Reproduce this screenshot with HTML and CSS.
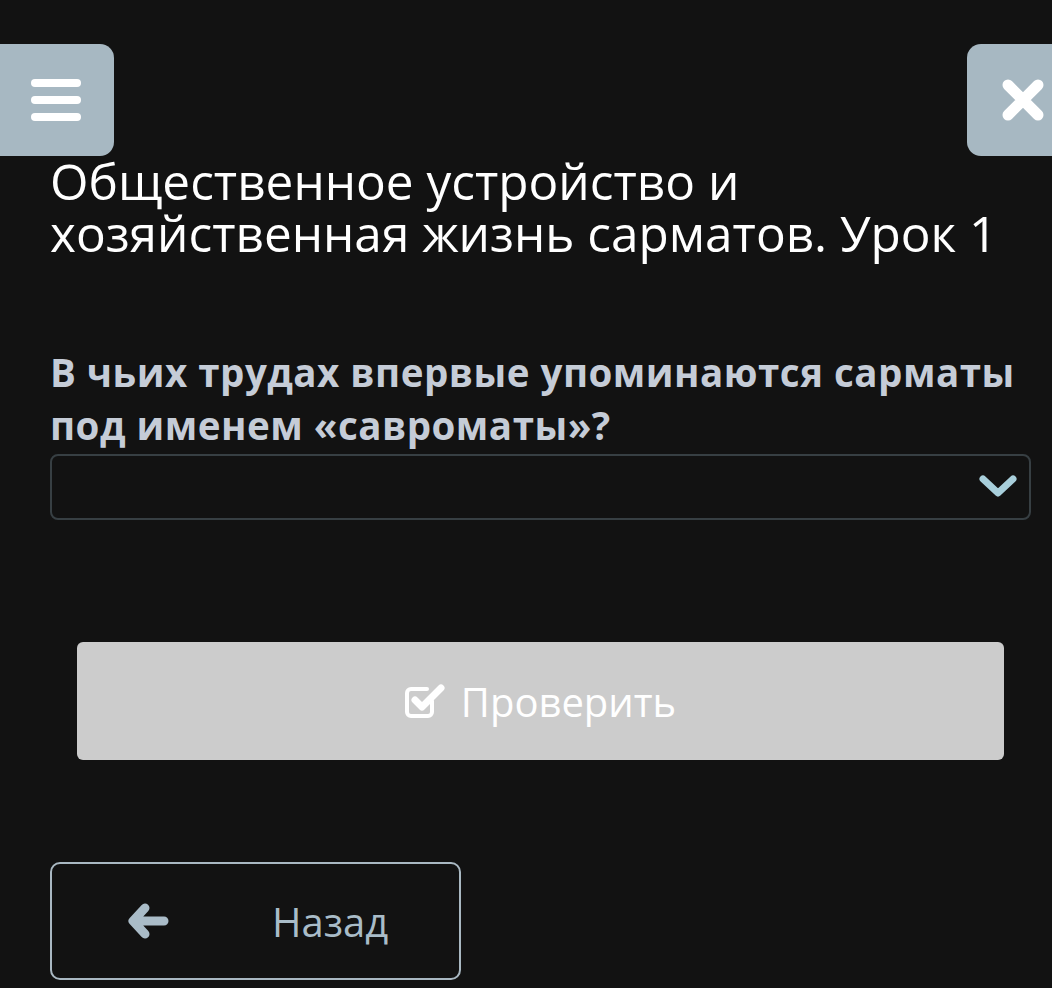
FILE: index.html
```html
<!DOCTYPE html>
<html lang="ru">
<head>
<meta charset="utf-8">
<title>Урок</title>
<link rel="stylesheet" href="styles.css">
</head>
<body>
<header class="topbar">
  <button class="menu-btn" aria-label="Меню">
    <svg width="52" height="44" viewBox="0 0 52 44">
      <rect x="1" y="1" width="50" height="8" rx="4" fill="#fff"/>
      <rect x="1" y="18" width="50" height="8" rx="4" fill="#fff"/>
      <rect x="1" y="35" width="50" height="8" rx="4" fill="#fff"/>
    </svg>
  </button>
  <button class="close-btn" aria-label="Закрыть">
    <svg width="44" height="44" viewBox="0 0 44 44">
      <path d="M7 7 L37 37 M37 7 L7 37" stroke="#fff" stroke-width="11" stroke-linecap="round"/>
    </svg>
  </button>
</header>
<main class="content">
  <h1 class="title">Общественное устройство и хозяйственная жизнь сарматов. Урок 1</h1>
  <h2 class="question">В чьих трудах впервые упоминаются сарматы под именем «савроматы»?</h2>
  <div class="select">
    <svg class="chevron" width="38" height="26" viewBox="0 0 38 26">
      <path d="M4 5 L19 19 L34 5" fill="none" stroke="#a8cfdb" stroke-width="7" stroke-linecap="round" stroke-linejoin="round"/>
    </svg>
  </div>
  <div class="check-row">
    <button class="check-btn">
      <svg width="42" height="36" viewBox="0 0 42 36">
        <path d="M27 18 V29 A4 4 0 0 1 23 33 H6 A4 4 0 0 1 2 29 V10 A4 4 0 0 1 6 6 H22" fill="none" stroke="#fff" stroke-width="4" stroke-linecap="round"/>
        <path d="M10 17 L17 24 L36 5" fill="none" stroke="#fff" stroke-width="7" stroke-linecap="round" stroke-linejoin="round"/>
      </svg>
      <span>Проверить</span>
    </button>
  </div>
  <button class="back-btn">
    <svg width="42" height="36" viewBox="0 0 42 36">
      <path d="M17 5 L5 18 L17 31 M6 18 L36 18" fill="none" stroke="#aabcc8" stroke-width="9" stroke-linecap="round" stroke-linejoin="round"/>
    </svg>
    <span>Назад</span>
  </button>
</main>
</body>
</html>
```

FILE: styles.css
```css
html, body {
  margin: 0;
  padding: 0;
  background: #121212;
}
body {
  font-family: "Open Sans", "Noto Sans", sans-serif;
  width: 1052px;
  height: 988px;
  overflow: hidden;
}
button {
  font-family: inherit;
  border: none;
  cursor: pointer;
  padding: 0;
}
.topbar {
  display: flex;
  justify-content: space-between;
  align-items: flex-start;
  padding-top: 44px;
}
.menu-btn {
  width: 114px;
  height: 112px;
  background: #a7b8c2;
  border-radius: 0 14px 14px 0;
  display: flex;
  align-items: center;
  justify-content: center;
  padding-right: 2px;
}
.close-btn {
  width: 85px;
  height: 112px;
  background: #a7b8c2;
  border-radius: 14px 0 0 14px;
  display: flex;
  align-items: center;
  justify-content: flex-end;
  padding-right: 7px;
}
.content {
  padding: 0 21px 0 50px;
}
.title {
  margin: -1px 0 0;
  font-weight: 400;
  font-size: 49.5px;
  line-height: 52px;
  color: #ffffff;
}
.question {
  margin: 87px 0 0;
  font-weight: 700;
  font-size: 38.5px;
  letter-spacing: 0.5px;
  line-height: 53px;
  color: #c5ccd7;
}
.select {
  margin-top: 2px;
  height: 62px;
  border: 2px solid #373f43;
  border-radius: 8px;
  display: flex;
  align-items: center;
  justify-content: flex-end;
  padding-right: 12px;
}
.check-row {
  padding: 122px 27px 0;
}
.check-btn {
  width: 100%;
  height: 118px;
  background: #cccccc;
  border-radius: 6px;
  display: flex;
  align-items: center;
  justify-content: center;
  gap: 14px;
  color: #ffffff;
  font-size: 40px;
}
.back-btn {
  margin-top: 102px;
  width: 411px;
  height: 118px;
  background: transparent;
  border: 2px solid #a9b8c2;
  border-radius: 10px;
  display: flex;
  align-items: center;
  padding-left: 76px;
  gap: 102px;
  color: #a9bcc8;
  font-size: 40px;
}
```
